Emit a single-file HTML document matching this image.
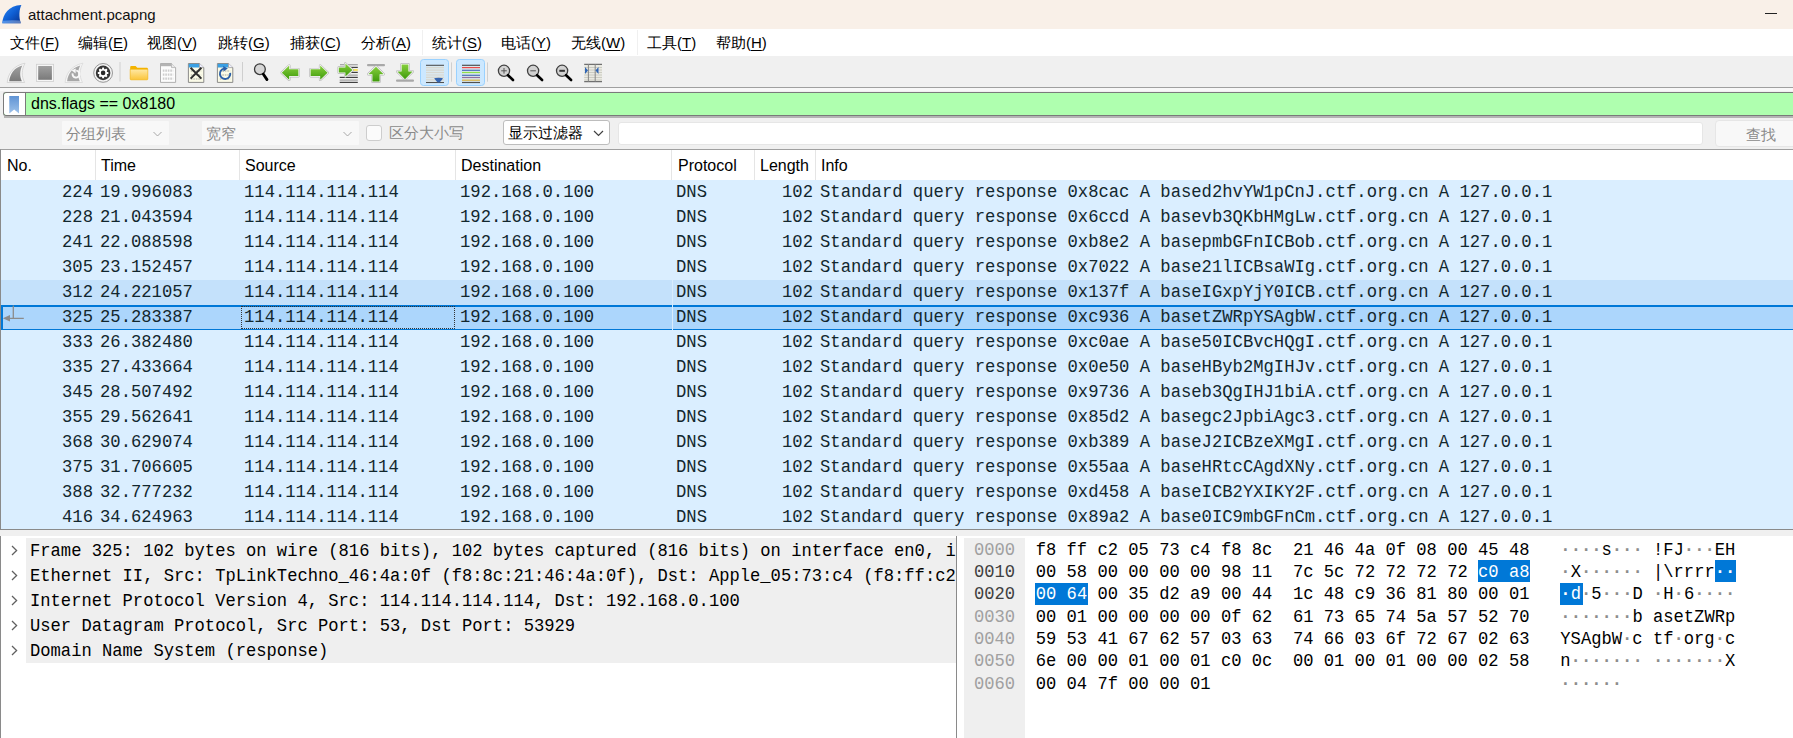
<!DOCTYPE html>
<html><head><meta charset="utf-8">
<style>
*{box-sizing:border-box;margin:0;padding:0}
html,body{width:1793px;height:738px;overflow:hidden;background:#fff;font-family:"Liberation Sans",sans-serif;color:#000}
.abs{position:absolute}
#title{left:0;top:0;width:1793px;height:29px;background:#f9f0e8}
#title .t{left:28px;top:6px;font-size:15px;line-height:18px;color:#111}
#menu{left:0;top:29px;width:1793px;height:27px;background:#fff}
#menu span{position:absolute;top:5px;font-size:15px;line-height:18px;color:#000;white-space:nowrap}
#menu u{text-decoration:underline;text-underline-offset:2px}
#tool{left:0;top:56px;width:1793px;height:32px;background:#f0f0f0;border-bottom:1px solid #a0a0a0}
#filt{left:0;top:88px;width:1793px;height:61px;background:#f0f0f0}
#fbox{left:3px;top:92px;width:1790px;height:24px;background:#afffaf;border:1px solid #7a7a7a;border-right:none;border-radius:3px 0 0 3px}
#bm{left:0;top:0;width:22px;height:22px;background:#fff;border-right:1px solid #7a7a7a;border-radius:3px 0 0 3px}
#ftxt{left:27px;top:2px;font-size:16px;line-height:18px;color:#000;white-space:nowrap}
#plist{left:0;top:149px;width:1793px;height:381px;background:#fff;border-top:1px solid #a0a0a0;border-left:1px solid #8a8a8a;border-bottom:1px solid #8a8a8a;overflow:hidden}
#hdr{left:0;top:0;width:1793px;height:30px;background:#fff}
#hdr span{position:absolute;top:6px;font-size:16px;line-height:19px}
#hdr i{position:absolute;top:0;width:1px;height:30px;background:#e5e5e5}
.row{position:absolute;left:0;width:1792px;height:25px;background:#daeeff;font-family:"Liberation Mono",monospace;font-size:17.2px;line-height:25px;white-space:pre;color:#12272e}
.row span{position:absolute;top:0;transform:scaleY(1.1);transform-origin:0 17px}
.row .no{right:1700px;text-align:right}
.row .len{right:980px;text-align:right}
.hov{background:#c4e1fb}
.sel{background:#acd6fc;border-top:2px solid #0078d7;border-bottom:1px solid #0078d7;line-height:22px}
.sel span{top:-2px;line-height:25px}

#split{left:0;top:530px;width:1793px;height:6px;background:#f0f0f0}
#det{left:0;top:536px;width:957px;height:202px;background:#fff;border-left:1px solid #8a8a8a;border-right:1px solid #8a8a8a;overflow:hidden}
#detbg{left:25px;top:2px;width:931px;height:125px;background:#efefef}
.dl{position:absolute;left:29px;height:25px;font-family:"Liberation Mono",monospace;font-size:17.15px;line-height:25px;white-space:pre;color:#000;transform:scaleY(1.1);transform-origin:0 17px}
.chev{position:absolute;left:10px;width:7px;height:11px}
#hex{left:957px;top:536px;width:836px;height:202px;background:#fff;overflow:hidden}
#offbg{left:7px;top:2px;width:61px;height:200px;background:#efefef}
.hl{position:absolute;left:17px;height:22px;font-family:"Liberation Mono",monospace;font-size:17.15px;line-height:22px;white-space:pre;color:#000;transform:scaleY(1.1);transform-origin:0 15.5px}
.hl .o{color:#a0a0a0}
.hl .od{color:#404040}
.hl .d{color:#8c8c8c;font-weight:bold}
.hl .s{color:#fff}
.hsel{position:absolute;background:#0078d7;height:22.4px}
.hl .s .d{color:#fff}

.combo{position:absolute;background:#f8f8f8;border:none;border-radius:1px}
.combo span{position:absolute;left:4px;top:4px;font-size:15px;line-height:18px;color:#8a8a8a;white-space:nowrap}
.combo svg{position:absolute;top:9.5px;width:11px;height:7px}
#findtxt{left:389px;top:124px;font-size:15px;line-height:18px;color:#8a8a8a;white-space:nowrap}
#chk{left:366px;top:125px;width:16px;height:16px;border:1px solid #cdcdcd;border-radius:3px;background:#fbfbfb}
#dfc{left:503px;top:120px;width:107px;height:25px;background:#fff;border:1px solid #bdbdbd;border-radius:3px}
#dfc span{position:absolute;left:4px;top:3px;font-size:15px;line-height:18px;color:#000;white-space:nowrap}
#sfield{left:618px;top:122px;width:1085px;height:23px;background:#fff;border:1px solid #e6e6e6;border-radius:3px}
#fbtn{left:1715px;top:120px;width:82px;height:27px;background:#f8f8f8;border:1px solid #e6e6e6;border-radius:4px}
#fbtn span{position:absolute;left:30px;top:5px;font-size:15px;line-height:18px;color:#8a8a8a}
</style></head><body>
<div id="title" class="abs">
  <svg class="abs" style="left:0;top:0;width:26px;height:29px" viewBox="0 0 26 29">
    <defs><linearGradient id="sh" x1="0.1" y1="0.1" x2="0.9" y2="0.9"><stop offset="0" stop-color="#2a82ee"/><stop offset="0.5" stop-color="#0f5fd4"/><stop offset="1" stop-color="#0a3a9a"/></linearGradient>
    <linearGradient id="sh2" x1="0" y1="0" x2="1" y2="0"><stop offset="0" stop-color="#5c9cf0"/><stop offset="1" stop-color="#6a86c0"/></linearGradient></defs>
    <path d="M2.3,23.3 C2.8,14.5 8.5,5.2 21.4,4.9 C19.2,9 18.6,16.5 20.8,23.3 Z" fill="url(#sh)"/>
    <path d="M2.7,20.8 Q11,19.6 20.3,20.6 L20.8,23.3 L2.3,23.3 Z" fill="url(#sh2)" opacity="0.85"/>
  </svg>
  <div class="abs t">attachment.pcapng</div>
  <div class="abs" style="left:1765px;top:13px;width:12px;height:1px;background:#222"></div>
</div>
<div id="menu" class="abs">
  <i style="position:absolute;left:422px;top:1px;width:1px;height:25px;background:#f0f0f0"></i><i style="position:absolute;left:637px;top:1px;width:1px;height:25px;background:#f0f0f0"></i>
  <span style="left:10px">文件(<u>F</u>)</span>
  <span style="left:78px">编辑(<u>E</u>)</span>
  <span style="left:147px">视图(<u>V</u>)</span>
  <span style="left:218px">跳转(<u>G</u>)</span>
  <span style="left:290px">捕获(<u>C</u>)</span>
  <span style="left:361px">分析(<u>A</u>)</span>
  <span style="left:432px">统计(<u>S</u>)</span>
  <span style="left:501px">电话(<u>Y</u>)</span>
  <span style="left:571px">无线(<u>W</u>)</span>
  <span style="left:647px">工具(<u>T</u>)</span>
  <span style="left:716px">帮助(<u>H</u>)</span>
</div>
<div id="tool" class="abs"></div>
<div id="filt" class="abs"></div>
<div class="abs" style="left:0;top:88px;width:1793px;height:3px;background:#f8f8f8"></div>
<div class="abs" style="left:4px;top:116px;width:1789px;height:1.5px;background:#b4b4b4"></div>
<svg id="tb" style="position:absolute;left:0;top:0;width:620px;height:90px" viewBox="0 0 620 90">
<defs>
<linearGradient id="gg" x1="0" y1="0" x2="0" y2="1"><stop offset="0" stop-color="#a0a0a0"/><stop offset="1" stop-color="#7a7a7a"/></linearGradient>
<linearGradient id="gr" x1="0" y1="0" x2="0" y2="1"><stop offset="0" stop-color="#86cf3c"/><stop offset="1" stop-color="#3f9a0c"/></linearGradient>
<linearGradient id="fy" x1="0" y1="0" x2="0" y2="1"><stop offset="0" stop-color="#ffe9a6"/><stop offset="1" stop-color="#fbc53a"/></linearGradient>
</defs>
<!-- shark fin 1 -->
<path d="M7.2,82.5 C8,73.5 13.5,65.5 25,63.2 C21.6,69.5 21.2,76 24.6,82.5 Z" fill="#f6f6f6" stroke="#cfcfcf" stroke-width="0.8"/>
<path d="M9.2,81.2 C10,74 14.5,67.5 22.4,65.6 C19.8,70.5 19.4,76 21.9,81.2 Z" fill="url(#gg)"/>
<!-- stop -->
<rect x="36.4" y="64.3" width="17.2" height="17.2" fill="#f6f6f6" stroke="#cfcfcf" stroke-width="0.8"/>
<rect x="38.2" y="66" width="13.7" height="13.8" fill="url(#gg)"/>
<!-- shark fin 2 restart -->
<path d="M65.1,82.5 C65.9,73.5 71.4,65.5 82.9,63.2 C79.5,69.5 79.1,76 82.5,82.5 Z" fill="#f6f6f6" stroke="#d8d8d8" stroke-width="0.8"/>
<path d="M67.1,81.2 C67.9,74 72.4,67.5 80.3,65.6 C77.7,70.5 77.3,76 79.8,81.2 Z" fill="#a8a8a8"/>
<path d="M72.6,73.4 A3.5,3.5 0 1 0 76.2,70.6" fill="none" stroke="#f8f8f8" stroke-width="1.9"/>
<path d="M71.6,70.2 L75.8,68.6 L75.6,73.4 Z" fill="#f8f8f8"/>
<!-- gear -->
<circle cx="103.1" cy="72.9" r="9.4" fill="#f4f4f4" stroke="#8a8a8a" stroke-width="0.9"/>
<circle cx="103.1" cy="72.9" r="7.3" fill="#353535"/>
<g fill="#fff" transform="translate(103.1 72.9)">
<circle r="4"/>
<rect x="-1" y="-5.3" width="2" height="10.6" rx="0.5"/>
<rect x="-1" y="-5.3" width="2" height="10.6" rx="0.5" transform="rotate(45)"/>
<rect x="-1" y="-5.3" width="2" height="10.6" rx="0.5" transform="rotate(90)"/>
<rect x="-1" y="-5.3" width="2" height="10.6" rx="0.5" transform="rotate(135)"/>
<circle r="2.3" fill="#2a2a2a"/>
</g>
<rect x="119.5" y="62" width="1" height="19.5" fill="#cfcfcf"/>
<!-- folder -->
<path d="M130.2,67 Q130.2,65.9 131.3,65.9 L135.6,65.9 L137.3,67.8 L147,67.8 Q147.8,67.8 147.8,68.6 L147.8,70 L130.2,70 Z" fill="#f4b400"/>
<path d="M130.2,69.2 L147.8,69.2 L147.8,79 Q147.8,79.8 147,79.8 L131,79.8 Q130.2,79.8 130.2,79 Z" fill="url(#fy)" stroke="#f3b000" stroke-width="0.6"/>
<!-- doc -->
<path d="M160.5,63.5 H171.5 L175.6,67.6 V82.4 H160.5 Z" fill="#fcfcfc" stroke="#a8a8a8" stroke-width="0.9"/>
<path d="M160.9,63.9 H171.2 V66.2 H160.9 Z" fill="#b4b4b4"/>
<path d="M171.5,63.5 V67.6 H175.6" fill="#e8e8e8" stroke="#a8a8a8" stroke-width="0.7"/>
<g stroke="#cdcdcd" stroke-width="2.4" stroke-dasharray="1.6 0.9"><path d="M162.8,70.6 H173.2 M162.8,74.6 H173.2 M162.8,78.6 H173.2"/></g>
<!-- doc close -->
<path d="M188.4,63.5 H199.5 L203.8,67.6 V82.4 H188.4 Z" fill="#fbfbe8" stroke="#808080" stroke-width="0.9"/>
<path d="M188.8,63.9 H199.3 V67.5 H188.8 Z" fill="#3aa0e4"/>
<path d="M199.5,63.5 V67.6 H203.8" fill="#eef" stroke="#909090" stroke-width="0.7"/>
<g stroke="#d0d0c0" stroke-width="2.2" stroke-dasharray="1.6 0.9"><path d="M190.8,71 H201.2 M190.8,75 H201.2 M190.8,79 H201.2"/></g>
<path d="M190.6,67.8 L201.4,78.6 M201.4,67.8 L190.6,78.6" stroke="#2e2e2e" stroke-width="2"/>
<!-- doc reload -->
<path d="M217.4,63.5 H228.5 L232.8,67.6 V82.4 H217.4 Z" fill="#fbfbe8" stroke="#808080" stroke-width="0.9"/>
<path d="M217.8,63.9 H228.3 V67.5 H217.8 Z" fill="#3aa0e4"/>
<path d="M228.5,63.5 V67.6 H232.8" fill="#eef" stroke="#909090" stroke-width="0.7"/>
<g stroke="#d0d0c0" stroke-width="2.2" stroke-dasharray="1.6 0.9"><path d="M219.8,71 H230.2 M219.8,75 H230.2 M219.8,79 H230.2"/></g>
<path d="M224.2,68.6 A5.2,5.2 0 1 0 230.2,72.8" fill="none" stroke="#2a5fa8" stroke-width="1.9"/>
<path d="M223.2,66 L227.8,68.4 L223.6,71.4 Z" fill="#2a5fa8"/>
<rect x="242" y="62" width="1" height="19.5" fill="#cfcfcf"/>
<!-- find -->
<circle cx="259.9" cy="69.2" r="5.4" fill="#d6d6d6" stroke="#3a3a3a" stroke-width="1.3"/>
<path d="M263.4,74.2 L267,79.6" stroke="#000" stroke-width="2.8" stroke-linecap="round"/>
<!-- left arrow -->
<path d="M281.8,72.7 L289.2,65.6 L289.2,69.3 L298.4,69.3 L298.4,76.1 L289.2,76.1 L289.2,79.8 Z" fill="none" stroke="#b4b4b4" stroke-width="2.6" stroke-linejoin="round"/><path d="M281.8,72.7 L289.2,65.6 L289.2,69.3 L298.4,69.3 L298.4,76.1 L289.2,76.1 L289.2,79.8 Z" fill="none" stroke="#fbfbfb" stroke-width="1.4" stroke-linejoin="round"/><path d="M281.8,72.7 L289.2,65.6 L289.2,69.3 L298.4,69.3 L298.4,76.1 L289.2,76.1 L289.2,79.8 Z" fill="url(#gr)"/>
<!-- right arrow -->
<path d="M327.6,72.7 L320.2,65.6 L320.2,69.3 L310.6,69.3 L310.6,76.1 L320.2,76.1 L320.2,79.8 Z" fill="none" stroke="#b4b4b4" stroke-width="2.6" stroke-linejoin="round"/><path d="M327.6,72.7 L320.2,65.6 L320.2,69.3 L310.6,69.3 L310.6,76.1 L320.2,76.1 L320.2,79.8 Z" fill="none" stroke="#fbfbfb" stroke-width="1.4" stroke-linejoin="round"/><path d="M327.6,72.7 L320.2,65.6 L320.2,69.3 L310.6,69.3 L310.6,76.1 L320.2,76.1 L320.2,79.8 Z" fill="url(#gr)"/>
<!-- goto packet -->
<g stroke-width="1.2">
<path d="M340,64.7 H357.8" stroke="#a0a0a0"/><path d="M346,67.4 H357.8" stroke="#404040"/>
<path d="M351,70 H357.8" stroke="#f5e040" stroke-width="1.6"/><path d="M346,72.4 H357.8" stroke="#404040"/>
<path d="M346,75.1 H357.8" stroke="#a0a0a0"/><path d="M339.7,77.4 H357.8" stroke="#404040"/>
<path d="M339.7,80.1 H357.8" stroke="#a0a0a0"/><path d="M339.7,82.4 H357.8" stroke="#404040"/>
</g>
<path d="M338.8,67.6 L345.4,67.6 L345.4,63.6 L352.4,70 L345.4,76.4 L345.4,72.4 L338.8,72.4 Z" fill="none" stroke="#b4b4b4" stroke-width="2.6" stroke-linejoin="round"/><path d="M338.8,67.6 L345.4,67.6 L345.4,63.6 L352.4,70 L345.4,76.4 L345.4,72.4 L338.8,72.4 Z" fill="none" stroke="#fbfbfb" stroke-width="1.4" stroke-linejoin="round"/><path d="M338.8,67.6 L345.4,67.6 L345.4,63.6 L352.4,70 L345.4,76.4 L345.4,72.4 L338.8,72.4 Z" fill="url(#gr)"/>
<!-- first packet -->
<rect x="367" y="64" width="18" height="2.2" rx="1" fill="#a8a8a8"/>
<path d="M376,66.8 L383.6,74.2 L379.6,74.2 L379.6,81.4 L372.4,81.4 L372.4,74.2 L368.4,74.2 Z" fill="none" stroke="#b4b4b4" stroke-width="2.6" stroke-linejoin="round"/><path d="M376,66.8 L383.6,74.2 L379.6,74.2 L379.6,81.4 L372.4,81.4 L372.4,74.2 L368.4,74.2 Z" fill="none" stroke="#fbfbfb" stroke-width="1.4" stroke-linejoin="round"/><path d="M376,66.8 L383.6,74.2 L379.6,74.2 L379.6,81.4 L372.4,81.4 L372.4,74.2 L368.4,74.2 Z" fill="url(#gr)"/>
<!-- last packet -->
<path d="M401.6,64.4 L408.4,64.4 L408.4,71.5 L412.6,71.5 L405,79.2 L397.4,71.5 L401.6,71.5 Z" fill="none" stroke="#b4b4b4" stroke-width="2.6" stroke-linejoin="round"/><path d="M401.6,64.4 L408.4,64.4 L408.4,71.5 L412.6,71.5 L405,79.2 L397.4,71.5 L401.6,71.5 Z" fill="none" stroke="#fbfbfb" stroke-width="1.4" stroke-linejoin="round"/><path d="M401.6,64.4 L408.4,64.4 L408.4,71.5 L412.6,71.5 L405,79.2 L397.4,71.5 L401.6,71.5 Z" fill="url(#gr)"/>
<rect x="396" y="79.4" width="18" height="2.3" rx="1" fill="#a8a8a8"/>
<!-- autoscroll toggled -->
<rect x="420.5" y="59.5" width="28" height="26" rx="3" fill="#cce8ff" stroke="#99d1ff" stroke-width="1"/>
<g stroke-width="1.1">
<path d="M426,65.3 H444" stroke="#505050"/>
<path d="M426,67.6 H444 M426,70.1 H444 M426,72.5 H444 M426,75 H444 M426,77.4 H444 M426,79.9 H444" stroke="#c4c4bc"/>
<path d="M426,82.5 H444" stroke="#505050"/>
</g>
<rect x="426" y="66.2" width="18" height="15.8" fill="#e8e8e0" opacity="0.55"/>
<path d="M434.2,78.5 Q434.6,77.8 438.6,77.8 Q442.6,77.8 443,78.5 L439.6,82.6 L437.6,82.6 Z" fill="#3565b0"/>
<rect x="451" y="62.4" width="1" height="19.3" fill="#cfcfcf"/>
<!-- colorize toggled -->
<rect x="456.5" y="59.5" width="28" height="26" rx="3" fill="#cce8ff" stroke="#99d1ff" stroke-width="1"/>
<rect x="462" y="66" width="18" height="16" fill="#e8e8e0" opacity="0.55"/>
<g stroke-width="1.2">
<path d="M462,65.3 H480" stroke="#505050"/><path d="M462,67.6 H480" stroke="#e84a4a"/>
<path d="M462,70.3 H480" stroke="#4a72b8"/><path d="M462,72.5 H480" stroke="#8fe04a"/>
<path d="M462,75.3 H480" stroke="#4a72b8"/><path d="M462,77.5 H480" stroke="#9070a0"/>
<path d="M462,80.2 H480" stroke="#d8b040"/><path d="M462,82.5 H480" stroke="#505050"/>
</g>
<rect x="487" y="62.4" width="1" height="19.3" fill="#cfcfcf"/>
<!-- zoom in -->
<circle cx="504" cy="70.8" r="5.6" fill="#d2d2d2" stroke="#404040" stroke-width="1.3"/>
<path d="M504,68 V73.6 M501.2,70.8 H506.8" stroke="#555" stroke-width="1"/>
<path d="M508,75.2 L513,80" stroke="#000" stroke-width="2.6" stroke-linecap="round"/>
<!-- zoom out -->
<circle cx="533.1" cy="70.8" r="5.6" fill="#d2d2d2" stroke="#404040" stroke-width="1.3"/>
<path d="M530.3,70.8 H535.9" stroke="#555" stroke-width="1"/>
<path d="M537.1,75.2 L542.1,80" stroke="#000" stroke-width="2.6" stroke-linecap="round"/>
<!-- zoom reset -->
<circle cx="562.1" cy="70.8" r="5.6" fill="#d2d2d2" stroke="#404040" stroke-width="1.3"/>
<path d="M559.3,70.8 H564.9" stroke="#333" stroke-width="2"/>
<path d="M566.1,75.2 L571.1,80" stroke="#000" stroke-width="2.6" stroke-linecap="round"/>
<!-- resize columns -->
<rect x="584.2" y="65" width="17.8" height="16" fill="#eaeae2"/>
<path d="M584.2,67.5 H602 M584.2,70 H602 M584.2,72.5 H602 M584.2,75 H602 M584.2,77.5 H602 M584.2,80 H602" stroke="#c8c8c0" stroke-width="0.9"/>
<path d="M584.2,64.3 H602 M584.2,81.6 H602" stroke="#707070" stroke-width="1.2"/>
<path d="M588.4,64.3 V81.6 M595.2,64.3 V81.6" stroke="#888" stroke-width="1"/>
<path d="M585,67 L588,70.5 L585,74 Z M598.5,67 L595.5,70.5 L598.5,74 Z" fill="#2f65b5"/>
</svg>

<div id="fbox" class="abs">
  <div id="bm" class="abs"><svg style="position:absolute;left:4px;top:2px;width:13px;height:20px" viewBox="0 0 13 20"><defs><linearGradient id="bk" x1="0" y1="0" x2="0" y2="1"><stop offset="0" stop-color="#5f93d4"/><stop offset="1" stop-color="#9ec2ea"/></linearGradient></defs><path d="M1.3,1 H11 V18.6 L6.15,14.6 L1.3,18.6 Z" fill="url(#bk)"/></svg></div>
  <div id="ftxt" class="abs">dns.flags == 0x8180</div>
</div>

<div class="combo abs" style="left:61.5px;top:121px;width:107px;height:24px"><span>分组列表</span><svg style="left:90px" viewBox="0 0 11 7"><path d="M1.5 1 L5.5 5 L9.5 1" fill="none" stroke="#a8a8a8" stroke-width="1"/></svg></div>
<div class="combo abs" style="left:202px;top:121px;width:156.5px;height:24px"><span>宽窄</span><svg style="left:140px" viewBox="0 0 11 7"><path d="M1.5 1 L5.5 5 L9.5 1" fill="none" stroke="#a8a8a8" stroke-width="1"/></svg></div>
<div id="chk" class="abs"></div>
<div id="findtxt" class="abs">区分大小写</div>
<div id="dfc" class="abs"><span>显示过滤器</span><svg style="position:absolute;left:89px;top:9px;width:11px;height:7px" viewBox="0 0 11 7"><path d="M1 1 L5.5 5.5 L10 1" fill="none" stroke="#404040" stroke-width="1.2"/></svg></div>
<div id="sfield" class="abs"></div>
<div id="fbtn" class="abs"><span>查找</span></div>
<div id="plist" class="abs">
  <div id="hdr" class="abs">
    <span style="left:6px">No.</span>
    <span style="left:100px">Time</span>
    <span style="left:244px">Source</span>
    <span style="left:460px">Destination</span>
    <span style="left:677px">Protocol</span>
    <span style="left:759px">Length</span>
    <span style="left:820px">Info</span>
    <i style="left:94px"></i><i style="left:238px"></i><i style="left:454px"></i><i style="left:670px"></i><i style="left:753px"></i><i style="left:814px"></i>
  </div>
  <div class="row" style="top:30px"><span class="no">224</span><span style="left:99px">19.996083</span><span style="left:243px">114.114.114.114</span><span style="left:459px">192.168.0.100</span><span style="left:675px">DNS</span><span class="len">102</span><span style="left:819px">Standard query response 0x8cac A based2hvYW1pCnJ.ctf.org.cn A 127.0.0.1</span></div>
<div class="row" style="top:55px"><span class="no">228</span><span style="left:99px">21.043594</span><span style="left:243px">114.114.114.114</span><span style="left:459px">192.168.0.100</span><span style="left:675px">DNS</span><span class="len">102</span><span style="left:819px">Standard query response 0x6ccd A basevb3QKbHMgLw.ctf.org.cn A 127.0.0.1</span></div>
<div class="row" style="top:80px"><span class="no">241</span><span style="left:99px">22.088598</span><span style="left:243px">114.114.114.114</span><span style="left:459px">192.168.0.100</span><span style="left:675px">DNS</span><span class="len">102</span><span style="left:819px">Standard query response 0xb8e2 A basepmbGFnICBob.ctf.org.cn A 127.0.0.1</span></div>
<div class="row" style="top:105px"><span class="no">305</span><span style="left:99px">23.152457</span><span style="left:243px">114.114.114.114</span><span style="left:459px">192.168.0.100</span><span style="left:675px">DNS</span><span class="len">102</span><span style="left:819px">Standard query response 0x7022 A base21lICBsaWIg.ctf.org.cn A 127.0.0.1</span></div>
<div class="row hov" style="top:130px"><span class="no">312</span><span style="left:99px">24.221057</span><span style="left:243px">114.114.114.114</span><span style="left:459px">192.168.0.100</span><span style="left:675px">DNS</span><span class="len">102</span><span style="left:819px">Standard query response 0x137f A baseIGxpYjY0ICB.ctf.org.cn A 127.0.0.1</span></div>
<div class="row sel" style="top:155px"><span class="no">325</span><span style="left:99px">25.283387</span><span style="left:243px">114.114.114.114</span><span style="left:459px">192.168.0.100</span><span style="left:675px">DNS</span><span class="len">102</span><span style="left:819px">Standard query response 0xc936 A basetZWRpYSAgbW.ctf.org.cn A 127.0.0.1</span></div>
<div class="row" style="top:180px"><span class="no">333</span><span style="left:99px">26.382480</span><span style="left:243px">114.114.114.114</span><span style="left:459px">192.168.0.100</span><span style="left:675px">DNS</span><span class="len">102</span><span style="left:819px">Standard query response 0xc0ae A base50ICBvcHQgI.ctf.org.cn A 127.0.0.1</span></div>
<div class="row" style="top:205px"><span class="no">335</span><span style="left:99px">27.433664</span><span style="left:243px">114.114.114.114</span><span style="left:459px">192.168.0.100</span><span style="left:675px">DNS</span><span class="len">102</span><span style="left:819px">Standard query response 0x0e50 A baseHByb2MgIHJv.ctf.org.cn A 127.0.0.1</span></div>
<div class="row" style="top:230px"><span class="no">345</span><span style="left:99px">28.507492</span><span style="left:243px">114.114.114.114</span><span style="left:459px">192.168.0.100</span><span style="left:675px">DNS</span><span class="len">102</span><span style="left:819px">Standard query response 0x9736 A baseb3QgIHJ1biA.ctf.org.cn A 127.0.0.1</span></div>
<div class="row" style="top:255px"><span class="no">355</span><span style="left:99px">29.562641</span><span style="left:243px">114.114.114.114</span><span style="left:459px">192.168.0.100</span><span style="left:675px">DNS</span><span class="len">102</span><span style="left:819px">Standard query response 0x85d2 A basegc2JpbiAgc3.ctf.org.cn A 127.0.0.1</span></div>
<div class="row" style="top:280px"><span class="no">368</span><span style="left:99px">30.629074</span><span style="left:243px">114.114.114.114</span><span style="left:459px">192.168.0.100</span><span style="left:675px">DNS</span><span class="len">102</span><span style="left:819px">Standard query response 0xb389 A baseJ2ICBzeXMgI.ctf.org.cn A 127.0.0.1</span></div>
<div class="row" style="top:305px"><span class="no">375</span><span style="left:99px">31.706605</span><span style="left:243px">114.114.114.114</span><span style="left:459px">192.168.0.100</span><span style="left:675px">DNS</span><span class="len">102</span><span style="left:819px">Standard query response 0x55aa A baseHRtcCAgdXNy.ctf.org.cn A 127.0.0.1</span></div>
<div class="row" style="top:330px"><span class="no">388</span><span style="left:99px">32.777232</span><span style="left:243px">114.114.114.114</span><span style="left:459px">192.168.0.100</span><span style="left:675px">DNS</span><span class="len">102</span><span style="left:819px">Standard query response 0xd458 A baseICB2YXIKY2F.ctf.org.cn A 127.0.0.1</span></div>
<div class="row" style="top:355px"><span class="no">416</span><span style="left:99px">34.624963</span><span style="left:243px">114.114.114.114</span><span style="left:459px">192.168.0.100</span><span style="left:675px">DNS</span><span class="len">102</span><span style="left:819px">Standard query response 0x89a2 A base0IC9mbGFnCm.ctf.org.cn A 127.0.0.1</span></div><div class="abs" style="left:240px;top:156px;width:214px;height:23px;border:1px dotted #333"></div><svg class="abs" style="left:-1px;top:155px;width:30px;height:25px" viewBox="0 0 30 25"><path d="M13.3,0.5 V13.3 M8,13.3 H23.8" fill="none" stroke="#8c8c8c" stroke-width="1.3"/><path d="M2.8,13.3 L10,10 L10,16.6 Z" fill="#8c8c8c"/></svg><div class="abs" style="left:0;top:155px;width:2px;height:25px;background:#0078d7"></div><div class="abs" style="left:671px;top:130px;width:1px;height:50px;background:#d8ecfd"></div>
</div>

<div id="split" class="abs"></div>
<div id="det" class="abs">
  <div id="detbg" class="abs"></div>
  <svg class="chev" style="top:8.8px" viewBox="0 0 7 11"><path d="M1 1 L5.6 5.5 L1 10" fill="none" stroke="#606060" stroke-width="1.3"/></svg><svg class="chev" style="top:33.8px" viewBox="0 0 7 11"><path d="M1 1 L5.6 5.5 L1 10" fill="none" stroke="#606060" stroke-width="1.3"/></svg><svg class="chev" style="top:58.8px" viewBox="0 0 7 11"><path d="M1 1 L5.6 5.5 L1 10" fill="none" stroke="#606060" stroke-width="1.3"/></svg><svg class="chev" style="top:83.8px" viewBox="0 0 7 11"><path d="M1 1 L5.6 5.5 L1 10" fill="none" stroke="#606060" stroke-width="1.3"/></svg><svg class="chev" style="top:108.8px" viewBox="0 0 7 11"><path d="M1 1 L5.6 5.5 L1 10" fill="none" stroke="#606060" stroke-width="1.3"/></svg>
  <div class="dl" style="top:3px">Frame 325: 102 bytes on wire (816 bits), 102 bytes captured (816 bits) on interface en0, id 0</div>
  <div class="dl" style="top:28px">Ethernet II, Src: TpLinkTechno_46:4a:0f (f8:8c:21:46:4a:0f), Dst: Apple_05:73:c4 (f8:ff:c2:05:73:c4)</div>
  <div class="dl" style="top:53px">Internet Protocol Version 4, Src: 114.114.114.114, Dst: 192.168.0.100</div>
  <div class="dl" style="top:78px">User Datagram Protocol, Src Port: 53, Dst Port: 53929</div>
  <div class="dl" style="top:103px">Domain Name System (response)</div>
</div>
<div id="hex" class="abs">
  <div id="offbg" class="abs"></div>
  <div class="hsel" style="left:521px;top:24.1px;width:52px"></div><div class="hsel" style="left:758px;top:24.1px;width:21px"></div><div class="hsel" style="left:78px;top:46.5px;width:53px"></div><div class="hsel" style="left:603px;top:46.5px;width:23px"></div><div class="hl" style="top:3.50px"><span class="o">0000</span>  f8 ff c2 05 73 c4 f8 8c  21 46 4a 0f 08 00 45 48   <span class="d">·</span><span class="d">·</span><span class="d">·</span><span class="d">·</span>s<span class="d">·</span><span class="d">·</span><span class="d">·</span> !FJ<span class="d">·</span><span class="d">·</span><span class="d">·</span>EH</div>
<div class="hl" style="top:25.87px"><span class="od">0010</span>  00 58 00 00 00 00 98 11  7c 5c 72 72 72 72 <span class="s">c0 </span><span class="s">a8</span>   <span class="d">·</span>X<span class="d">·</span><span class="d">·</span><span class="d">·</span><span class="d">·</span><span class="d">·</span><span class="d">·</span> |\rrrr<span class="s"><span class="d">·</span></span><span class="s"><span class="d">·</span></span></div>
<div class="hl" style="top:48.24px"><span class="od">0020</span>  <span class="s">00 </span><span class="s">64</span> 00 35 d2 a9 00 44  1c 48 c9 36 81 80 00 01   <span class="s"><span class="d">·</span></span><span class="s">d</span><span class="d">·</span>5<span class="d">·</span><span class="d">·</span><span class="d">·</span>D <span class="d">·</span>H<span class="d">·</span>6<span class="d">·</span><span class="d">·</span><span class="d">·</span><span class="d">·</span></div>
<div class="hl" style="top:70.61px"><span class="o">0030</span>  00 01 00 00 00 00 0f 62  61 73 65 74 5a 57 52 70   <span class="d">·</span><span class="d">·</span><span class="d">·</span><span class="d">·</span><span class="d">·</span><span class="d">·</span><span class="d">·</span>b asetZWRp</div>
<div class="hl" style="top:92.98px"><span class="o">0040</span>  59 53 41 67 62 57 03 63  74 66 03 6f 72 67 02 63   YSAgbW<span class="d">·</span>c tf<span class="d">·</span>org<span class="d">·</span>c</div>
<div class="hl" style="top:115.35px"><span class="o">0050</span>  6e 00 00 01 00 01 c0 0c  00 01 00 01 00 00 02 58   n<span class="d">·</span><span class="d">·</span><span class="d">·</span><span class="d">·</span><span class="d">·</span><span class="d">·</span><span class="d">·</span> <span class="d">·</span><span class="d">·</span><span class="d">·</span><span class="d">·</span><span class="d">·</span><span class="d">·</span><span class="d">·</span>X</div>
<div class="hl" style="top:137.72px"><span class="o">0060</span>  00 04 7f 00 00 01                                  <span class="d">·</span><span class="d">·</span><span class="d">·</span><span class="d">·</span><span class="d">·</span><span class="d">·</span></div>
</div>
</body></html>
